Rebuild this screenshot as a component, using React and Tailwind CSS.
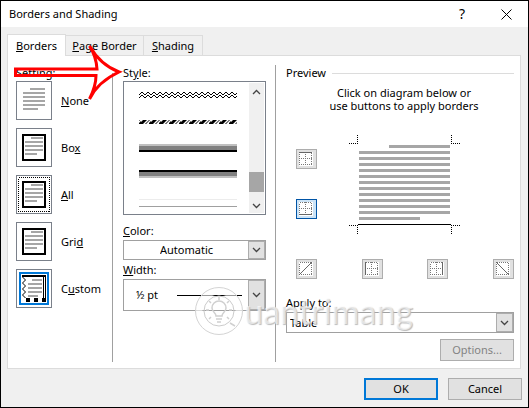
import { useState } from 'react'

const presets = [
  { id: 'none', label: <span><u>N</u>one</span> },
  { id: 'box', label: <span>Bo<u>x</u></span> },
  { id: 'all', label: <span><u>A</u>ll</span> },
  { id: 'grid', label: <span>Gri<u>d</u></span> },
  { id: 'custom', label: <span>C<u>u</u>stom</span> },
]

const edges = {
  top: 'M3 3.5h13',
  bottom: 'M3 15.5h13',
  left: 'M3.5 3v13',
  right: 'M15.5 3v13',
  up: 'M3 16L16 3',
  down: 'M3 3L16 16',
}

function PresetIcon({ id }) {
  const framed = id !== 'none' && id !== 'custom'
  return (
    <svg width="34" height="37" viewBox="0 0 34 37" shapeRendering="crispEdges">
      {id === 'all' && (
        <rect x="1.5" y="1.5" width="31" height="34" fill="none" stroke="#000" strokeDasharray="1 1" />
      )}
      {id === 'none' && (
        <path d="M13 7h15M6 11h22M6 15h22M6 19h22M6 23h22M6 27h15" stroke="#a6a6a6" strokeWidth="2" />
      )}
      {framed && (
        <>
          <rect x="6" y="6" width="22" height="25" fill="#fff" stroke="#000" strokeWidth="2" />
          <path d="M14 9h12M8 13h18M8 17h18M8 21h18M8 25h12" stroke="#a6a6a6" strokeWidth="2" />
        </>
      )}
      {id === 'custom' && (
        <>
          <rect x="3" y="3" width="28" height="31" fill="none" stroke="#0078d7" strokeWidth="2" />
          <path d="M15 10h10M11 14h14M11 18h14M11 22h14M11 26h10" stroke="#a6a6a6" strokeWidth="2" />
          <path d="M5 6h24" stroke="#000" strokeWidth="2" />
          <path d="M26.5 7v21M28.5 7v21" stroke="#000" />
          <path d="M9 30h4M17 30h4M25 30h4" stroke="#000" strokeWidth="4" />
          <path d="M5.5 7l3 3-3 3 3 3-3 3 3 3-3 3 3 3" fill="none" stroke="#000" shapeRendering="auto" />
        </>
      )}
    </svg>
  )
}

function EdgeButton({ edge, active }) {
  const diagonal = edge === 'up' || edge === 'down'
  return (
    <button
      aria-label={`${edge} border`}
      className={`w-[21px] h-5 border ${active ? 'border-[#0054a6] bg-[#cce4f7]' : 'border-[#adadad] bg-[#e1e1e1]'}`}
    >
      <svg width="19" height="18" viewBox="0 0 19 18" shapeRendering="crispEdges">
        <rect x="2" y="2" width="14" height="14" fill="#fff" />
        <rect x="2.5" y="2.5" width="12" height="12" fill="none" stroke="#777" strokeDasharray="1 1" />
        {!diagonal && <path d="M2 8.5h13M8.5 2v13" stroke="#777" strokeDasharray="1 1" />}
        <path d={edges[edge]} transform="translate(-1 -1)" stroke="#666" shapeRendering="auto" />
      </svg>
    </button>
  )
}

function Chevron({ up }) {
  return (
    <svg width="9" height="6" viewBox="0 0 9 6">
      <path d={up ? 'M1 5l3.5-3.5L8 5' : 'M1 1l3.5 3.5L8 1'} fill="none" stroke="#444" strokeWidth="1.3" />
    </svg>
  )
}

function DropDown({ id, value, className, selectClass, children }) {
  return (
    <div className={`flex border border-[#a0a0a0] bg-white ${className}`}>
      <select id={id} className={`min-w-0 flex-1 appearance-none outline-none ${selectClass}`}>
        <option>{value}</option>
      </select>
      {children}
      <span className="pointer-events-none flex w-[17px] items-center justify-center border border-[#adadad] bg-[#e1e1e1]">
        <Chevron />
      </span>
    </div>
  )
}

function StyleList() {
  return (
    <div role="listbox" tabIndex={0} aria-labelledby="style-label" className="flex h-[134px] border border-[#7a808a] bg-white p-px">
      <svg className="min-w-0 flex-1" height="130" viewBox="0 0 124 130" preserveAspectRatio="xMinYMin slice" shapeRendering="crispEdges">
        <defs>
          <pattern id="wave" width="6" height="6" patternUnits="userSpaceOnUse" x="14" y="9">
            <path d="M2 0h2v1h-2zM1 1h1v1h-1zM4 1h1v1h-1zM0 2h1v1h-1zM5 2h1v1h-1z" />
            <path d="M2 3h2v1h-2zM1 4h1v1h-1zM4 4h1v1h-1zM0 5h1v1h-1zM5 5h1v1h-1z" />
          </pattern>
          <pattern id="slash" width="10" height="4" patternUnits="userSpaceOnUse" x="14" y="37">
            <path d="M0 4L4 0h4L4 4zM6 4l4-4v1L7 4zM0 0h1L0 1zM0 3l2-2v1L0 4z" shapeRendering="auto" />
          </pattern>
        </defs>
        <rect x="14" y="9" width="98" height="6" fill="url(#wave)" />
        <rect x="14" y="37" width="98" height="4" fill="url(#slash)" />
        <path d="M14 62h98M14 94h98" stroke="#c0c0c0" strokeWidth="2" />
        <path d="M14 65h98M14 91h98" stroke="#808080" strokeWidth="4" />
        <path d="M14 68h98M14 88h98" stroke="#000" strokeWidth="2" />
        <path d="M14 116.5h98" stroke="#ececec" />
        <path d="M14 123.5h98" stroke="#a0a0a0" />
      </svg>
      <div className="flex w-[15px] flex-col items-center bg-[#f0f0f0] pt-1.5 pb-1">
        <Chevron up />
        <div className="mt-auto mb-[11px] h-5 w-full bg-[#a6a6a6]" />
        <Chevron />
      </div>
    </div>
  )
}

function Diagram() {
  return (
    <svg width="111" height="99" viewBox="0 0 111 99" shapeRendering="crispEdges">
      <path d="M8.5 0v9M0 8.5h9M102.5 0v9M102 8.5h9M0 90.5h9M8.5 90v9M102 90.5h9M102.5 90v9" stroke="#000" strokeDasharray="1 1" />
      <rect x="40" y="10" width="61" height="3" fill="#a6a6a6" />
      {Array.from({ length: 11 }, (_, i) => (
        <rect key={i} x="10" y={16 + i * 6} width="91" height="3" fill="#a6a6a6" />
      ))}
      <rect x="10" y="82" width="61" height="3" fill="#a6a6a6" />
      <path d="M9 89.5h93" stroke="#000" />
    </svg>
  )
}

function Arrow() {
  return (
    <svg className="pointer-events-none absolute top-[39px] left-[11px]" width="112" height="66" viewBox="12 40 112 66">
      <path
        d="M15.5 69H97C96.5 61 94 53 89.5 46C97 59 106 67 119 72C106 78 96 86 89.5 99C93 92 96 84 96 75.5H15.5Z"
        fill="none"
        stroke="#f00"
        strokeWidth="3"
      />
    </svg>
  )
}

function Watermark() {
  return (
    <div className="pointer-events-none absolute top-[284px] left-[193px] flex items-center">
      <svg width="50" height="52" viewBox="0 0 50 52" fill="none">
        <circle cx="25" cy="26" r="20" stroke="#fff" strokeOpacity=".6" strokeWidth="7" />
        <circle cx="25" cy="26" r="23.5" stroke="#d4d4d4" />
        <circle cx="25" cy="26" r="15" stroke="#ccc" />
        <path d="M22 31c0-3-4-4-4-8a7 7 0 0114 0c0 4-4 5-4 8zM22 34h6M23 37h4M25 12v3M15 16l2 2M35 16l-2 2M12 25h3M35 25h3M15 34l2-2M35 34l-2-2M36 38l5 3" stroke="#d0d0d0" strokeWidth="1.5" />
      </svg>
      <span className="font-['Lato',sans-serif] text-[34px] leading-10 text-white/60 [text-shadow:1px_1px_1px_#bbb]">uantrimang</span>
    </div>
  )
}

export default function App() {
  const [preset, setPreset] = useState('custom')

  return (
    <main className="relative flex min-h-screen flex-col border border-black bg-[#f0f0f0] font-['Noto_Sans',sans-serif] text-[11px] leading-4 text-black">
      <header className="flex h-[26px] items-center bg-white pr-4 pl-2">
        <h1 className="flex-1">Borders and Shading</h1>
        <button aria-label="Help" className="mr-9 text-sm leading-4">?</button>
        <button aria-label="Close">
          <svg width="11" height="11" viewBox="0 0 11 11">
            <path d="M.5.5l10 10M10.5.5l-10 10" stroke="#000" />
          </svg>
        </button>
      </header>

      <div role="tablist" className="mt-[7px] flex items-end pl-1.5">
        <button role="tab" aria-selected="true" className="relative z-10 -mb-px h-[22px] w-[59px] border border-b-0 border-[#dcdcdc] bg-white">
          <u>B</u>orders
        </button>
        <button role="tab" className="h-5 w-[78px] border border-b-0 border-l-0 border-[#dcdcdc]"><u>P</u>age Border</button>
        <button role="tab" className="h-5 w-[59px] border border-b-0 border-l-0 border-[#dcdcdc]"><u>S</u>hading</button>
      </div>

      <section className="mr-[7px] ml-1.5 flex h-[314px] border border-[#dcdcdc] bg-white pt-[9px] pr-1.5 pb-1.5 pl-2">
        <fieldset className="w-[97px] border-r border-[#a0a0a0]">
          <legend className="h-4">Setting:</legend>
          <div className="flex flex-col gap-2">
            {presets.map((p) => (
              <label key={p.id} className="flex items-center">
                <input type="radio" name="preset" className="sr-only" checked={preset === p.id} onChange={() => setPreset(p.id)} />
                <span className="mr-[9px] border border-[#7a808a]"><PresetIcon id={p.id} /></span>
                {p.label}
              </label>
            ))}
          </div>
        </fieldset>

        <div className="flex w-[163px] flex-col border-r border-[#a0a0a0] pr-[9px] pl-[10px]">
          <span id="style-label">St<u>y</u>le:</span>
          <StyleList />
          <label htmlFor="color" className="mt-2 mb-px"><u>C</u>olor:</label>
          <DropDown id="color" value="Automatic" className="h-5" selectClass="pl-9" />
          <label htmlFor="width" className="mt-0.5 mb-px"><u>W</u>idth:</label>
          <DropDown id="width" value="½ pt" className="h-8" selectClass="pl-3">
            <span className="pointer-events-none mr-1.5 w-[65px] self-center border-t border-black" />
          </DropDown>
        </div>

        <div className="flex min-w-0 flex-1 flex-col pl-[10px]">
          <div className="flex items-center gap-1.5">
            Preview
            <span className="flex-1 border-t border-[#dcdcdc]" />
          </div>
          <p className="mt-[5px] pl-2 text-center leading-[13px]">
            Click on diagram below or<br />use buttons to apply borders
          </p>
          <div className="mt-[23px] flex pl-[10px]">
            <div className="mt-3.5 flex flex-col gap-[30px]">
              <EdgeButton edge="top" />
              <EdgeButton edge="bottom" active />
            </div>
            <div className="ml-8"><Diagram /></div>
          </div>
          <div className="mt-[25px] flex justify-between pl-[10px]">
            <EdgeButton edge="up" />
            <EdgeButton edge="left" />
            <EdgeButton edge="right" />
            <EdgeButton edge="down" />
          </div>
          <label htmlFor="apply" className="mt-4 mb-px">App<u>l</u>y to:</label>
          <DropDown id="apply" value="Table" className="h-[21px]" selectClass="pl-[3px]" />
          <button disabled className="mt-1.5 h-[22px] w-[74px] self-end border border-[#adadad] bg-[#e1e1e1] text-[#838383]">
            Options...
          </button>
        </div>
      </section>

      <footer className="mt-[9px] flex justify-end gap-[10px] pr-1.5">
        <button className="h-[22px] w-[74px] border-2 border-[#0078d7] bg-[#e1e1e1]">OK</button>
        <button className="h-[22px] w-[74px] border border-[#adadad] bg-[#e1e1e1]">Cancel</button>
      </footer>

      <Arrow />
      <Watermark />
    </main>
  )
}
